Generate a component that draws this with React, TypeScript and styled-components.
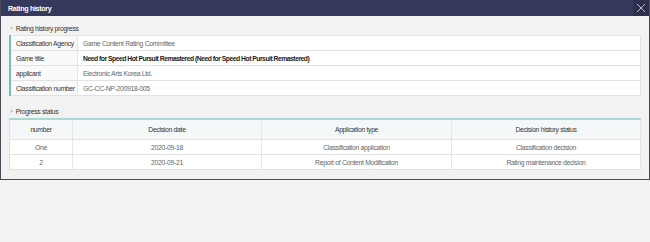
import React from "react"
import styled, { createGlobalStyle } from "styled-components"

const GlobalStyle = createGlobalStyle`
  html, body {
    margin: 0;
    padding: 0;
    background: #f3f2f2;
    font-family: "Liberation Sans", Arial, sans-serif;
  }
`

const Modal = styled.div`
  width: 650px;
  box-sizing: border-box;
  background: #f2f2f3;
  border: 1px solid #4a4a58;
  border-top: none;
`

const Header = styled.div`
  height: 16px;
  background: #36385c;
  display: flex;
  align-items: center;
  justify-content: space-between;
  padding-left: 7px;
`

const Title = styled.div`
  color: #ffffff;
  font-size: 7.2px;
  font-weight: bold;
  letter-spacing: -0.35px;
`

const CloseButton = styled.div`
  width: 16px;
  height: 16px;
  background: #2c2e4c;
  display: flex;
  align-items: center;
  justify-content: center;
`

const Body = styled.div`
  padding: 7px 8px 9px 8px;
`

const SectionTitle = styled.div<{ $gap?: number }>`
  display: flex;
  align-items: center;
  gap: 3px;
  height: 10px;
  margin-top: ${p => p.$gap || 0}px;
  margin-bottom: 2px;
  font-size: 6.8px;
  letter-spacing: -0.3px;
  color: #333;
  padding-left: 1px;

  & span {
    font-size: 5px;
    color: #777;
  }
`

const InfoTable = styled.table`
  width: 100%;
  border-collapse: collapse;
  background: #fff;
  border-left: 2px solid #6fc2bb;
  border-right: 1px solid #e2e2e2;
  border-top: 1px solid #e2e2e2;

  & td {
    height: 14px;
    padding: 0 0 0 5px;
    border-bottom: 1px solid #e2e2e2;
    font-size: 6.8px;
    letter-spacing: -0.3px;
    color: #666;
    white-space: nowrap;
  }
`

const LabelCell = styled.td`
  width: 61px;
  background: #fafafa;
  border-right: 1px solid #e6e6e6;
  && {
    color: #333;
  }
`

const ValueCell = styled.td<{ $strong?: boolean }>`
  && {
    color: ${p => (p.$strong ? "#222" : "#666")};
    font-weight: ${p => (p.$strong ? "bold" : "normal")};
    letter-spacing: ${p => (p.$strong ? "-0.5px" : "-0.3px")};
  }
`

const StatusTable = styled.table`
  width: 100%;
  border-collapse: collapse;
  table-layout: fixed;
  background: #fff;
  border-top: 2px solid #a8d9d3;
  border-left: 1px solid #e2e2e2;
  border-right: 1px solid #e2e2e2;

  & th {
    height: 19px;
    background: #f5f8f9;
    font-weight: normal;
    color: #333;
  }

  & td {
    height: 14px;
    color: #666;
  }

  & th, & td {
    padding: 0;
    text-align: center;
    font-size: 6.8px;
    letter-spacing: -0.3px;
    border-bottom: 1px solid #e2e2e2;
    border-right: 1px solid #e6e6e6;
    white-space: nowrap;
  }
`

const info = [
  { label: "Classification Agency", value: "Game Content Rating Committee" },
  { label: "Game title", value: "Need for Speed Hot Pursuit Remastered (Need for Speed Hot Pursuit Remastered)", strong: true },
  { label: "applicant", value: "Electronic Arts Korea Ltd." },
  { label: "Classification number", value: "GC-CC-NP-200918-005" },
]

const history = [
  { no: "One", date: "2020-09-18", type: "Classification application", status: "Classification decision" },
  { no: "2", date: "2020-09-21", type: "Report of Content Modification", status: "Rating maintenance decision" },
]

const App: React.FC = () => {
  return (
    <>
      <GlobalStyle/>
      <Modal>
        <Header>
          <Title>Rating history</Title>
          <CloseButton>
            <svg width="10" height="10" viewBox="0 0 10 10">
              <path d="M1 1 L9 9 M9 1 L1 9" stroke="#c9cad6" strokeWidth="0.9"/>
            </svg>
          </CloseButton>
        </Header>
        <Body>
          <SectionTitle><span>&gt;</span>Rating history progress</SectionTitle>
          <InfoTable>
            <tbody>
              {info.map(row => (
                <tr key={row.label}>
                  <LabelCell>{row.label}</LabelCell>
                  <ValueCell $strong={row.strong}>{row.value}</ValueCell>
                </tr>
              ))}
            </tbody>
          </InfoTable>

          <SectionTitle $gap={10}><span>&gt;</span>Progress status</SectionTitle>
          <StatusTable>
            <colgroup>
              <col style={{ width: "63px" }}/>
              <col style={{ width: "189px" }}/>
              <col style={{ width: "190px" }}/>
              <col/>
            </colgroup>
            <thead>
              <tr>
                <th>number</th>
                <th>Decision date</th>
                <th>Application type</th>
                <th>Decision history status</th>
              </tr>
            </thead>
            <tbody>
              {history.map(row => (
                <tr key={row.no}>
                  <td>{row.no}</td>
                  <td>{row.date}</td>
                  <td>{row.type}</td>
                  <td>{row.status}</td>
                </tr>
              ))}
            </tbody>
          </StatusTable>
        </Body>
      </Modal>
    </>
  )
}

export default App
